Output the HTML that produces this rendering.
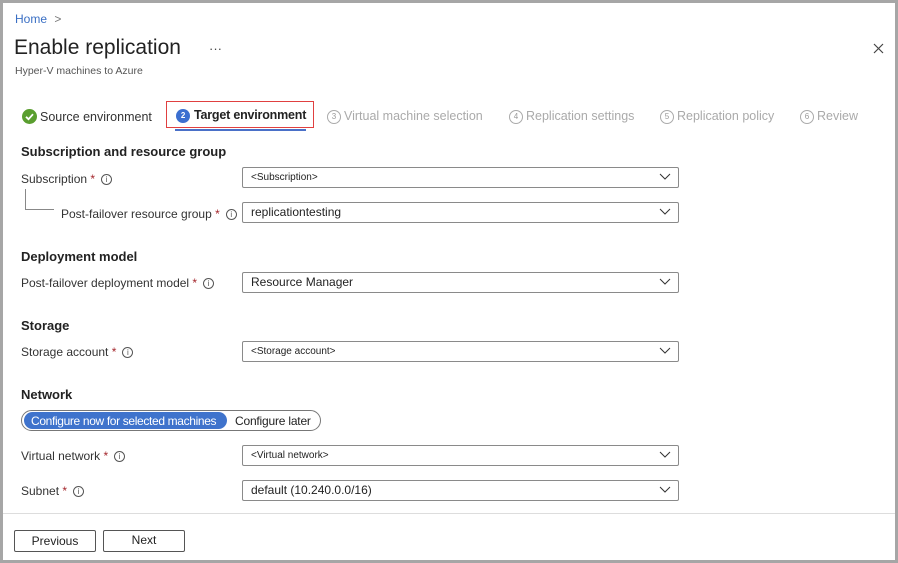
<!DOCTYPE html>
<html><head><meta charset="utf-8"><style>
*{margin:0;padding:0;box-sizing:border-box}
body{width:898px;height:563px;background:#a6a6a6;font-family:"Liberation Sans",sans-serif;color:#222;position:relative;overflow:hidden}
#p{position:absolute;left:3px;top:3px;width:892px;height:557px;background:#fff}
.a{position:absolute;white-space:nowrap}
.h{font-weight:bold;font-size:13px;color:#222}
.l{font-size:12px;color:#333}
.st{color:#a4262c}
.i{display:inline-block;width:11px;height:11px;border:1px solid #555;border-radius:50%;font-size:8px;line-height:9px;text-align:center;color:#555;vertical-align:1px;margin-left:6px}
.dd{position:absolute;left:242px;width:437px;height:21px;border:1px solid #8a8a8a;border-radius:2px;font-size:12px;padding-left:8px;line-height:19px;color:#222}
.dd.s{font-size:10px}
.dd svg{position:absolute;right:7px;top:5px}
.t{font-size:12.5px;color:#aaa}
.c{display:inline-block;width:14px;height:14px;border:1px solid #aaa;border-radius:50%;font-size:8px;line-height:12px;text-align:center;color:#999;margin-right:3px;vertical-align:1px}
.btn{position:absolute;top:530px;height:22px;width:82px;border:1px solid #555;border-radius:2px;font-size:12px;text-align:center;line-height:20px;color:#222}
</style></head><body>
<div id="p"></div>
<div class="a" style="left:15px;top:12px;font-size:12px;color:#3a6fc4">Home <span style="color:#777;margin-left:4px">&gt;</span></div>
<div class="a" style="left:14px;top:36px;font-size:21px;color:#222">Enable replication</div>
<div class="a" style="left:209px;top:41px;font-size:13px;color:#444">···</div>
<div class="a" style="left:15px;top:65px;font-size:10.5px;color:#555">Hyper-V machines to Azure</div>
<svg class="a" style="left:873px;top:43px" width="11" height="11"><path d="M1 1L10 10M10 1L1 10" stroke="#444" stroke-width="1.2"/></svg>

<div class="a" style="left:22px;top:109px;font-size:12.5px;color:#333"><svg width="15" height="15" style="vertical-align:-3px;margin-right:3px"><circle cx="7.5" cy="7.5" r="7.5" fill="#5a9e2f"/><path d="M4 7.8L6.5 10.2L11 5.2" stroke="#fff" stroke-width="1.8" fill="none"/></svg>Source environment</div>
<div class="a" style="left:166px;top:101px;width:148px;height:27px;border:1.5px solid #e04040"></div>
<div class="a" style="left:176px;top:108px;font-size:12.5px;font-weight:bold;color:#222;letter-spacing:-0.2px"><span style="display:inline-block;width:14px;height:14px;border-radius:50%;background:#3b6fd0;color:#fff;font-size:8px;line-height:14px;text-align:center;vertical-align:1px;margin-right:4px">2</span>Target environment</div>
<div class="a" style="left:175px;top:129px;width:131px;height:2px;background:#4a70c8"></div>
<div class="a t" style="left:327px;top:109px"><span class="c">3</span>Virtual machine selection</div>
<div class="a t" style="left:509px;top:109px"><span class="c">4</span>Replication settings</div>
<div class="a t" style="left:660px;top:109px"><span class="c">5</span>Replication policy</div>
<div class="a t" style="left:800px;top:109px"><span class="c">6</span>Review</div>

<div class="a h" style="left:21px;top:144px">Subscription and resource group</div>
<div class="a l" style="left:21px;top:172px">Subscription <span class="st">*</span><span class="i">i</span></div>
<div class="dd s" style="top:167px">&lt;Subscription&gt;<svg width="12" height="8"><path d="M1 1L6 6L11 1" stroke="#333" fill="none"/></svg></div>
<div class="a" style="left:25px;top:189px;width:29px;height:21px;border-left:1px solid #888;border-bottom:1px solid #888"></div>
<div class="a l" style="left:61px;top:207px">Post-failover resource group <span class="st">*</span><span class="i">i</span></div>
<div class="dd" style="top:202px">replicationtesting<svg width="12" height="8"><path d="M1 1L6 6L11 1" stroke="#333" fill="none"/></svg></div>

<div class="a h" style="left:21px;top:249px">Deployment model</div>
<div class="a l" style="left:21px;top:276px">Post-failover deployment model <span class="st">*</span><span class="i">i</span></div>
<div class="dd" style="top:272px">Resource Manager<svg width="12" height="8"><path d="M1 1L6 6L11 1" stroke="#333" fill="none"/></svg></div>

<div class="a h" style="left:21px;top:318px">Storage</div>
<div class="a l" style="left:21px;top:345px">Storage account <span class="st">*</span><span class="i">i</span></div>
<div class="dd s" style="top:341px">&lt;Storage account&gt;<svg width="12" height="8"><path d="M1 1L6 6L11 1" stroke="#333" fill="none"/></svg></div>

<div class="a h" style="left:21px;top:387px">Network</div>
<div class="a" style="left:21px;top:410px;width:300px;height:21px;border:1px solid #777;border-radius:11px"></div>
<div class="a" style="left:24px;top:412px;width:203px;height:17px;background:#3f73cc;border-radius:9px"></div>
<div class="a" style="left:31px;top:414px;font-size:12px;color:#fff;letter-spacing:-0.35px">Configure now for selected machines</div>
<div class="a" style="left:235px;top:414px;font-size:12px;color:#222;letter-spacing:-0.2px">Configure later</div>
<div class="a l" style="left:21px;top:449px">Virtual network <span class="st">*</span><span class="i">i</span></div>
<div class="dd s" style="top:445px">&lt;Virtual network&gt;<svg width="12" height="8"><path d="M1 1L6 6L11 1" stroke="#333" fill="none"/></svg></div>
<div class="a l" style="left:21px;top:484px">Subnet <span class="st">*</span><span class="i">i</span></div>
<div class="dd" style="top:480px">default (10.240.0.0/16)<svg width="12" height="8"><path d="M1 1L6 6L11 1" stroke="#333" fill="none"/></svg></div>

<div class="a" style="left:3px;top:513px;width:892px;height:1px;background:#ddd"></div>
<div class="btn" style="left:14px">Previous</div>
<div class="btn" style="left:103px;line-height:18px">Next</div>
</body></html>
